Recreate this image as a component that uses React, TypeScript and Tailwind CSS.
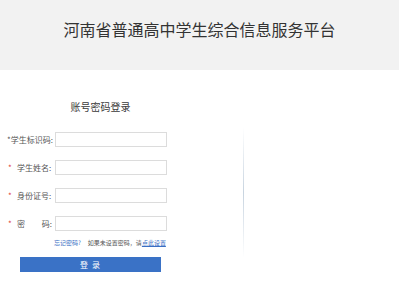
const font = { fontFamily: '"Noto Sans CJK SC", "Noto Sans", sans-serif' };

function Field({ label, mark, spread }: { label: string; mark: 'plain' | 'red'; spread?: boolean }) {
  return (
    <div className="flex items-center h-[15px]">
      <div className="w-[48px] flex items-center text-[8px] leading-none text-[#555]">
        {mark === 'plain' ? (
          <span className="whitespace-nowrap">*{label}:</span>
        ) : (
          <>
            <span className="text-[#e0403a] w-[10px] pl-[1px]">*</span>
            {spread ? (
              <span className="flex justify-between w-[36px] pr-[1px]">
                <span>密</span>
                <span>码:</span>
              </span>
            ) : (
              <span className="whitespace-nowrap">{label}:</span>
            )}
          </>
        )}
      </div>
      <input className="w-[112px] h-[15px] border border-[#dcdcdc] bg-white outline-none" />
    </div>
  );
}

export default function App() {
  return (
    <div className="w-[399px] h-[300px] bg-white overflow-hidden" style={font}>
      <div className="h-[70px] bg-[#f2f2f2] flex justify-center pt-[19px]">
        <h1 className="text-[16px] leading-[20px] text-[#333]">
          河南省普通高中学生综合信息服务平台
        </h1>
      </div>

      <div className="flex">
        <div className="w-[200px] pl-[7px]">
          <div className="pt-[31px] text-center text-[10px] leading-[12px] text-[#3a3a3a] pr-[6px]">
            账号密码登录
          </div>

          <div className="mt-[19px] flex flex-col gap-[13px]">
            <Field label="学生标识码" mark="plain" />
            <Field label="学生姓名" mark="red" />
            <Field label="身份证号" mark="red" />
            <Field label="密码" mark="red" spread />
          </div>

          <div className="mt-[7px] pl-[47px] text-[6px] leading-[10px] whitespace-nowrap">
            <span className="text-[#3a6fc4]">忘记密码?</span>
            <span className="text-[#555] ml-[7px]">如果未设置密码，请</span>
            <span className="text-[#3a6fc4] underline">点此设置</span>
          </div>

          <button className="mt-[9px] ml-[13px] w-[141px] h-[15px] bg-[#3a72c6] text-white text-[8px] leading-none tracking-[1px]">
            登 录
          </button>
        </div>

        <div className="ml-[43px] mt-[57px] w-px h-[131px] bg-gradient-to-b from-transparent via-[#c8d4e0] to-transparent" />
      </div>
    </div>
  );
}
